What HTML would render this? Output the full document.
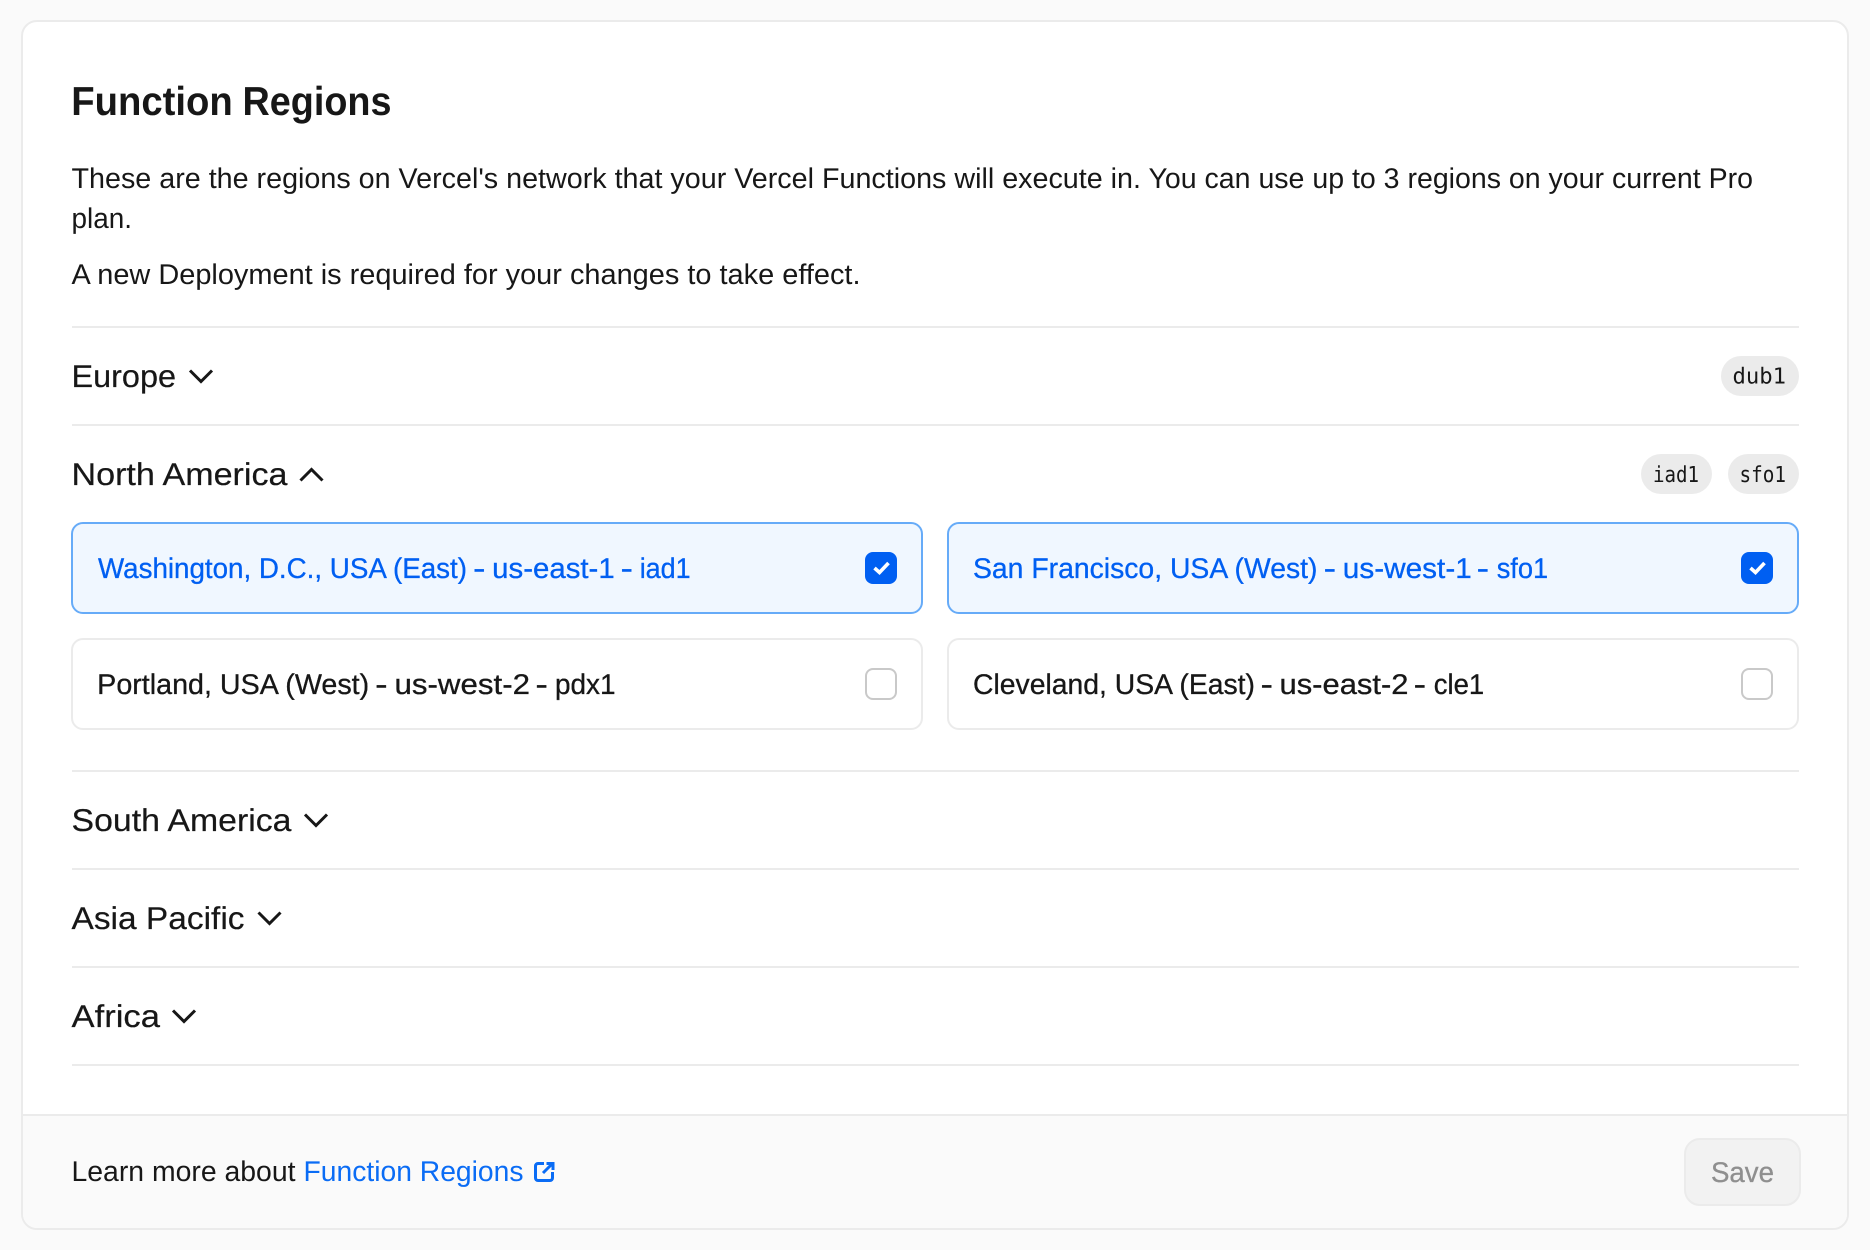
<!DOCTYPE html>
<html lang="en">
<head>
<meta charset="utf-8">
<title>Function Regions</title>
<style>
html,body{margin:0;padding:0;background:#fafafa;width:1870px;height:1250px;overflow:hidden}
svg{display:block}
text{font-family:"Liberation Sans",sans-serif;fill:#171717;text-rendering:geometricPrecision}
.h{font-size:40.5px;font-weight:700}
.b{font-size:28.5px}
.s{font-size:31.5px;stroke:#171717;stroke-width:.2}
.c{font-size:28.5px;stroke:#171717;stroke-width:.3}
.sel{fill:#005ff2;stroke:#005ff2}
.m{font-family:"DejaVu Sans Mono",monospace;font-size:22px}
.l{fill:#0a6cf5}
.sv{fill:#8f8f8f;stroke:#8f8f8f;font-size:28.5px;stroke-width:.3}
.d{stroke:#ebebeb;stroke-width:2}
.ch{fill:none;stroke:#171717;stroke-width:3}
</style>
</head>
<body>
<svg width="1870" height="1250" viewBox="0 0 1870 1250" xmlns="http://www.w3.org/2000/svg">
<rect x="0" y="0" width="1870" height="1250" fill="#fafafa"/>
<rect x="22" y="21" width="1826" height="1208" rx="15" fill="#fff" stroke="#ebebeb" stroke-width="2"/>
<path d="M23 1116H1847V1214a14 14 0 0 1-14 14H37a14 14 0 0 1-14-14Z" fill="#fafafa"/>
<line x1="23" y1="1115" x2="1847" y2="1115" class="d"/>

<text class="h" x="71.300" y="115" textLength="161.500" lengthAdjust="spacingAndGlyphs">Function</text>
<text class="h" x="242.500" y="115" textLength="149" lengthAdjust="spacingAndGlyphs">Regions</text>
<text class="b" x="71.500" y="188" textLength="1069.500" lengthAdjust="spacingAndGlyphs">These are the regions on Vercel's network that your Vercel Functions will execute in.</text>
<text class="b" x="1148.500" y="188" textLength="604.500" lengthAdjust="spacingAndGlyphs">You can use up to 3 regions on your current Pro</text>
<text class="b" x="71.500" y="228" textLength="60.500" lengthAdjust="spacingAndGlyphs">plan.</text>
<text class="b" x="71.500" y="284" textLength="789" lengthAdjust="spacingAndGlyphs">A new Deployment is required for your changes to take effect.</text>

<line x1="72" y1="327" x2="1799" y2="327" class="d"/>
<text class="s" x="71.500" y="387" textLength="104.500" lengthAdjust="spacingAndGlyphs">Europe</text>
<path class="ch" d="M190 370.500L201 381.500L212 370.500"/>
<rect x="1721" y="356" width="78" height="40" rx="20" fill="#ebebeb"/>
<text class="m" x="1732.500" y="383.500" textLength="53.500" lengthAdjust="spacingAndGlyphs">dub1</text>

<line x1="72" y1="425" x2="1799" y2="425" class="d"/>
<text class="s" x="71.500" y="485" textLength="216" lengthAdjust="spacingAndGlyphs">North America</text>
<path class="ch" d="M300.500 480.500L311.500 469.500L322.500 480.500"/>
<rect x="1641" y="454" width="71" height="40" rx="20" fill="#ebebeb"/>
<text class="m" x="1653" y="482" textLength="46" lengthAdjust="spacingAndGlyphs">iad1</text>
<rect x="1728" y="454" width="71" height="40" rx="20" fill="#ebebeb"/>
<text class="m" x="1739.500" y="482" textLength="46.500" lengthAdjust="spacingAndGlyphs">sfo1</text>

<rect x="72" y="523" width="850" height="90" rx="11" fill="#f0f7ff" stroke="#66abf8" stroke-width="2"/>
<text class="c sel" x="98" y="578" textLength="369" lengthAdjust="spacingAndGlyphs">Washington, D.C., USA (East)</text>
<text class="c sel" x="473" y="578" textLength="12.500" lengthAdjust="spacingAndGlyphs">-</text>
<text class="c sel" x="492.200" y="578" textLength="122.500" lengthAdjust="spacingAndGlyphs">us-east-1</text>
<text class="c sel" x="620.500" y="578" textLength="12.500" lengthAdjust="spacingAndGlyphs">-</text>
<text class="c sel" x="639.700" y="578" textLength="51" lengthAdjust="spacingAndGlyphs">iad1</text>
<rect x="865" y="552" width="32" height="32" rx="8" fill="#005ff2"/>
<path d="M874.500 568L879.500 572.500L888.500 563" fill="none" stroke="#fff" stroke-width="3.600"/>

<rect x="948" y="523" width="850" height="90" rx="11" fill="#f0f7ff" stroke="#66abf8" stroke-width="2"/>
<text class="c sel" x="973" y="578" textLength="344.500" lengthAdjust="spacingAndGlyphs">San Francisco, USA (West)</text>
<text class="c sel" x="1323.700" y="578" textLength="12.500" lengthAdjust="spacingAndGlyphs">-</text>
<text class="c sel" x="1342.800" y="578" textLength="129" lengthAdjust="spacingAndGlyphs">us-west-1</text>
<text class="c sel" x="1476.700" y="578" textLength="12.500" lengthAdjust="spacingAndGlyphs">-</text>
<text class="c sel" x="1496.700" y="578" textLength="51.500" lengthAdjust="spacingAndGlyphs">sfo1</text>
<rect x="1741" y="552" width="32" height="32" rx="8" fill="#005ff2"/>
<path d="M1750.500 568L1755.500 572.500L1764.500 563" fill="none" stroke="#fff" stroke-width="3.600"/>

<rect x="72" y="639" width="850" height="90" rx="11" fill="#fff" stroke="#ebebeb" stroke-width="2"/>
<text class="c" x="97.200" y="694" textLength="272" lengthAdjust="spacingAndGlyphs">Portland, USA (West)</text>
<text class="c" x="375.200" y="694" textLength="12.500" lengthAdjust="spacingAndGlyphs">-</text>
<text class="c" x="394.500" y="694" textLength="135.500" lengthAdjust="spacingAndGlyphs">us-west-2</text>
<text class="c" x="535.400" y="694" textLength="12.500" lengthAdjust="spacingAndGlyphs">-</text>
<text class="c" x="555" y="694" textLength="60.500" lengthAdjust="spacingAndGlyphs">pdx1</text>
<rect x="866" y="669" width="30" height="30" rx="7" fill="#fff" stroke="#c9c9c9" stroke-width="2"/>

<rect x="948" y="639" width="850" height="90" rx="11" fill="#fff" stroke="#ebebeb" stroke-width="2"/>
<text class="c" x="973" y="694" textLength="282" lengthAdjust="spacingAndGlyphs">Cleveland, USA (East)</text>
<text class="c" x="1260.500" y="694" textLength="12.500" lengthAdjust="spacingAndGlyphs">-</text>
<text class="c" x="1279.500" y="694" textLength="129" lengthAdjust="spacingAndGlyphs">us-east-2</text>
<text class="c" x="1413.700" y="694" textLength="12.500" lengthAdjust="spacingAndGlyphs">-</text>
<text class="c" x="1433.700" y="694" textLength="50.500" lengthAdjust="spacingAndGlyphs">cle1</text>
<rect x="1742" y="669" width="30" height="30" rx="7" fill="#fff" stroke="#c9c9c9" stroke-width="2"/>

<line x1="72" y1="771" x2="1799" y2="771" class="d"/>
<text class="s" x="71.500" y="831" textLength="220" lengthAdjust="spacingAndGlyphs">South America</text>
<path class="ch" d="M305 814.500L316 825.500L327 814.500"/>

<line x1="72" y1="869" x2="1799" y2="869" class="d"/>
<text class="s" x="71.500" y="929" textLength="173" lengthAdjust="spacingAndGlyphs">Asia Pacific</text>
<path class="ch" d="M258.500 912.500L269.500 923.500L280.500 912.500"/>

<line x1="72" y1="967" x2="1799" y2="967" class="d"/>
<text class="s" x="71.500" y="1027" textLength="88.500" lengthAdjust="spacingAndGlyphs">Africa</text>
<path class="ch" d="M173 1010.500L184 1021.500L195 1010.500"/>

<line x1="72" y1="1065" x2="1799" y2="1065" class="d"/>

<text class="b" x="71.500" y="1181" textLength="224" lengthAdjust="spacingAndGlyphs">Learn more about</text>
<text class="b l" x="303.500" y="1181" textLength="220" lengthAdjust="spacingAndGlyphs">Function Regions</text>
<path d="M544 1163.500H538a2.500 2.500 0 0 0-2.500 2.500V1178a2.500 2.500 0 0 0 2.500 2.500H550a2.500 2.500 0 0 0 2.500-2.500V1172" fill="none" stroke="#0a6cf5" stroke-width="3"/>
<path d="M543 1173L552 1164M546.500 1163.500H553V1170" fill="none" stroke="#0a6cf5" stroke-width="3"/>

<rect x="1685" y="1139" width="115" height="66" rx="15" fill="#f2f2f2" stroke="#ebebeb" stroke-width="2"/>
<text class="sv" x="1711" y="1182" textLength="63" lengthAdjust="spacingAndGlyphs">Save</text>
</svg>
</body>
</html>
